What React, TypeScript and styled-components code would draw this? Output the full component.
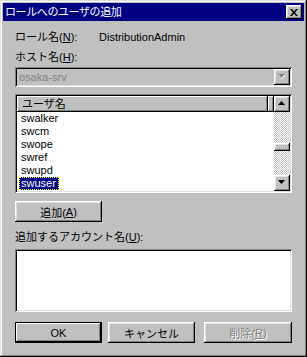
import React from 'react'
import styled, { createGlobalStyle } from 'styled-components'

const GlobalStyle = createGlobalStyle`
  html, body {
    margin: 0;
    padding: 0;
    background: #c0c0c0;
  }
  body {
    font-family: "Liberation Sans", "Noto Sans CJK JP", sans-serif;
    font-size: 11px;
    color: #000;
  }
`

const raised = `
  box-shadow: inset -1px -1px #000, inset 1px 1px #fff, inset -2px -2px #808080, inset 2px 2px #dfdfdf;
`
const sunken = `
  box-shadow: inset 1px 1px #808080, inset -1px -1px #fff, inset 2px 2px #000, inset -2px -2px #dfdfdf;
`

const Window = styled.div`
  width: 307px;
  height: 357px;
  box-sizing: border-box;
  padding: 3px;
  background: #c0c0c0;
  box-shadow: inset -1px -1px #000, inset 1px 1px #dfdfdf, inset -2px -2px #808080, inset 2px 2px #fff;
`

const TitleBar = styled.div`
  height: 18px;
  background: #000080;
  color: #fff;
  display: flex;
  align-items: center;
  justify-content: space-between;
  padding: 0 2px 0 2px;
`

const TitleText = styled.span`
  font-size: 11px;
  letter-spacing: -0.4px;
  line-height: 18px;
`

const CloseButton = styled.div`
  width: 16px;
  height: 14px;
  background: #c0c0c0;
  ${raised}
  display: flex;
  align-items: center;
  justify-content: center;
`

const Body = styled.div`
  padding: 10px 12px 0 12px;
`

const InfoRow = styled.div<{ gap?: number }>`
  display: grid;
  grid-template-columns: 84px 1fr;
  height: 13px;
  line-height: 13px;
  margin-top: ${(p) => p.gap ?? 0}px;
`

const Label = styled.div<{ gap?: number }>`
  height: 13px;
  line-height: 13px;
  margin-top: ${(p) => p.gap ?? 0}px;
`

const Combo = styled.div`
  margin-top: 3px;
  height: 20px;
  box-sizing: border-box;
  padding: 2px;
  ${sunken}
  display: flex;
  align-items: stretch;
`

const ComboText = styled.div`
  flex: 1;
  color: #808080;
  padding-left: 2px;
  line-height: 16px;
`

const DropButton = styled.div`
  width: 16px;
  background: #c0c0c0;
  ${raised}
  display: flex;
  align-items: center;
  justify-content: center;
`

const ListBox = styled.div`
  margin-top: 7px;
  height: 99px;
  box-sizing: border-box;
  padding: 2px;
  background: #fff;
  ${sunken}
  display: flex;
`

const ListMain = styled.div`
  flex: 1;
  display: flex;
  flex-direction: column;
`

const HeaderRow = styled.div`
  display: flex;
  height: 16px;
`

const HeaderCell = styled.div<{ w?: number }>`
  ${(p) => (p.w ? `width: ${p.w}px;` : 'flex: 1;')}
  background: #c0c0c0;
  box-shadow: inset -1px -1px #000, inset 1px 1px #fff, inset -2px -2px #808080;
  padding-left: 5px;
  line-height: 16px;
  box-sizing: border-box;
`

const Row = styled.div`
  height: 13px;
  padding-left: 2px;
  display: flex;
  align-items: stretch;
`

const Item = styled.span<{ selected?: boolean }>`
  padding: 0 2px 0 1px;
  line-height: 11px;
  border: 1px ${(p) => (p.selected ? 'dotted #ffff00' : 'solid transparent')};
  background: ${(p) => (p.selected ? '#000080' : 'transparent')};
  color: ${(p) => (p.selected ? '#fff' : '#000')};
`

const ScrollBar = styled.div`
  width: 16px;
  display: flex;
  flex-direction: column;
`

const ScrollButton = styled.div`
  height: 16px;
  background: #c0c0c0;
  ${raised}
  display: flex;
  align-items: center;
  justify-content: center;
`

const Track = styled.div`
  flex: 1;
  background: repeating-conic-gradient(#c0c0c0 0% 25%, #fff 0% 50%) 0 0 / 2px 2px;
`

const Thumb = styled.div<{ offset: number }>`
  margin-top: ${(p) => p.offset}px;
  height: 8px;
  background: #c0c0c0;
  ${raised}
`

const Button = styled.div<{ w?: number; isDefault?: boolean; disabled?: boolean; gap?: number }>`
  width: ${(p) => p.w ?? 87}px;
  height: 21px;
  box-sizing: border-box;
  background: #c0c0c0;
  display: flex;
  align-items: center;
  justify-content: center;
  margin-left: ${(p) => p.gap ?? 0}px;
  color: ${(p) => (p.disabled ? '#808080' : '#000')};
  text-shadow: ${(p) => (p.disabled ? '1px 1px #fff' : 'none')};
  ${(p) =>
    p.isDefault
      ? `box-shadow: inset 0 0 0 1px #000, inset -2px -2px #000, inset 2px 2px #fff, inset -3px -3px #808080;`
      : raised}
`

const AddButton = styled(Button)`
  margin-top: 8px;
`

const TextArea = styled.div`
  margin-top: 5px;
  height: 63px;
  background: #fff;
  ${sunken}
`

const ButtonRow = styled.div`
  margin-top: 10px;
  display: flex;
`

const Arrow = ({ dir, disabled }: { dir: 'up' | 'down'; disabled?: boolean }) => {
  const pts = dir === 'up' ? '3,0 6.5,4 -0.5,4' : '-0.5,0 6.5,0 3,4'
  return (
    <svg width="8" height="6" viewBox="0 0 8 6" style={{ display: 'block' }}>
      {disabled && <polygon points={dir === 'up' ? '4,1 7.5,5 0.5,5' : '0.5,1 7.5,1 4,5'} fill="#fff" />}
      <polygon points={pts} fill={disabled ? '#808080' : '#000'} transform="translate(0.5,0)" />
    </svg>
  )
}

const users = ['swalker', 'swcm', 'swope', 'swref', 'swupd', 'swuser']

const App = () => (
  <>
    <GlobalStyle />
    <Window>
      <TitleBar>
        <TitleText>ロールへのユーザの追加</TitleText>
        <CloseButton>
          <svg width="8" height="7" viewBox="0 0 8 7">
            <path d="M0 0h2l2 2.5L6 0h2L5 3.5 8 7H6L4 4.5 2 7H0l3-3.5z" fill="#000" />
          </svg>
        </CloseButton>
      </TitleBar>
      <Body>
        <InfoRow>
          <span>
            ロール名(<u>N</u>):
          </span>
          <span>DistributionAdmin</span>
        </InfoRow>
        <Label gap={7}>
          ホスト名(<u>H</u>):
        </Label>
        <Combo>
          <ComboText>osaka-srv</ComboText>
          <DropButton>
            <Arrow dir="down" disabled />
          </DropButton>
        </Combo>
        <ListBox>
          <ListMain>
            <HeaderRow>
              <HeaderCell w={251}>ユーザ名</HeaderCell>
              <HeaderCell />
            </HeaderRow>
            {users.map((u) => (
              <Row key={u}>
                <Item selected={u === 'swuser'}>{u}</Item>
              </Row>
            ))}
          </ListMain>
          <ScrollBar>
            <ScrollButton>
              <Arrow dir="up" />
            </ScrollButton>
            <Track>
              <Thumb offset={31} />
            </Track>
            <ScrollButton>
              <Arrow dir="down" />
            </ScrollButton>
          </ScrollBar>
        </ListBox>
        <AddButton>
          追加(<u>A</u>)
        </AddButton>
        <Label gap={9}>
          追加するアカウント名(<u>U</u>):
        </Label>
        <TextArea />
        <ButtonRow>
          <Button isDefault>OK</Button>
          <Button gap={6}>キャンセル</Button>
          <Button w={88} gap={9} disabled>
            削除(<u>R</u>)
          </Button>
        </ButtonRow>
      </Body>
    </Window>
  </>
)

export default App
